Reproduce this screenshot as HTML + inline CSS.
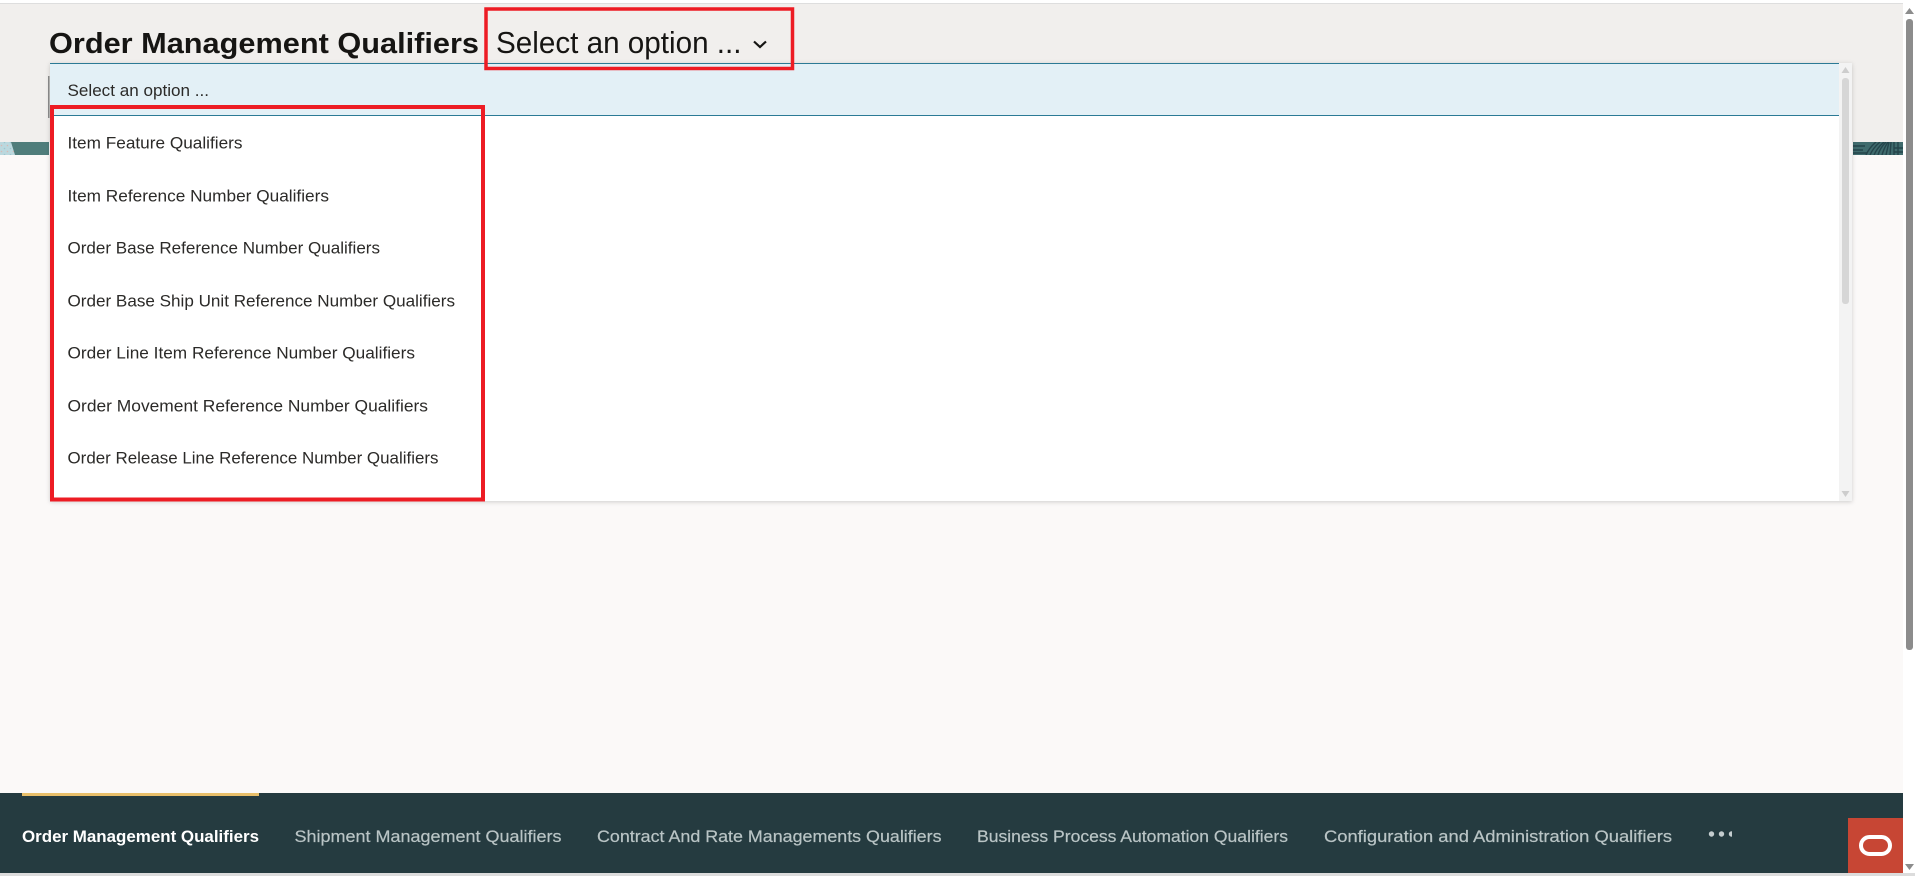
<!DOCTYPE html>
<html lang="en">
<head>
<meta charset="utf-8">
<title>Order Management Qualifiers</title>
<style>
html,body{margin:0;padding:0;width:1915px;height:876px;overflow:hidden;background:#fbf9f8}
svg{display:block;font-family:"Liberation Sans",Arial,sans-serif}
.li{font-size:17px;fill:#2b2a28}
.tab{font-size:17px;fill:#b9c4c5;stroke:#b9c4c5;stroke-width:.2}
</style>
</head>
<body>
<svg width="1915" height="876" viewBox="0 0 1915 876" xmlns="http://www.w3.org/2000/svg">
<defs>
<filter id="sh" x="-2%" y="-5%" width="104%" height="110%"><feDropShadow dx="0" dy="1" stdDeviation="2" flood-color="#000" flood-opacity=".18"/></filter>
<pattern id="spk" width="6" height="6" patternUnits="userSpaceOnUse"><rect width="6" height="6" fill="#bbd8de"/><circle cx="1.5" cy="1.5" r=".8" fill="#d6b9b5"/><circle cx="4.5" cy="4.5" r=".8" fill="#9cc7cf"/></pattern>
<clipPath id="dots"><rect x="1700" y="825" width="32" height="20"/></clipPath>
<clipPath id="rs"><rect x="1853" y="142" width="50" height="13"/></clipPath>
</defs>

<rect width="1915" height="876" fill="#fbf9f8"/>
<rect x="0" y="0" width="1915" height="3" fill="#fff"/>
<rect x="0" y="3" width="1903" height="1" fill="#dedede"/>
<rect x="0" y="4" width="1903" height="138" fill="#f1efed"/>

<rect x="0" y="142" width="49" height="13" fill="#4f7d7b"/>
<path d="M0 142H11L15 155H0Z" fill="url(#spk)"/>
<rect x="1853" y="142" width="50" height="13" fill="#3f6b6d"/>
<g clip-path="url(#rs)" fill="none" stroke="#24444b" stroke-width="1.4">
<path d="M1853 146h12M1853 150h10M1853 153h14"/>
<path d="M1866 155q3-7 10-13M1870 155q3-7 10-13M1874 155q3-7 10-13M1878 155q2-7 8-13M1882 155q2-7 6-13M1886 155l3-13M1890 155l1-13M1894 155v-13M1898 155v-13M1894 148h9M1894 152h9"/>
</g>

<rect x="1903" y="0" width="12" height="873" fill="#fff"/>
<path d="M1909.5 8L1914 14H1905Z" fill="#8c8c8c"/>
<rect x="1906" y="19" width="7" height="631" rx="3" fill="#8c8c8c"/>
<path d="M1905 864H1914L1909.5 870Z" fill="#8c8c8c"/>

<text x="49" y="53" font-size="29" font-weight="700" fill="#161513" textLength="430" lengthAdjust="spacingAndGlyphs">Order Management Qualifiers</text>
<text x="496" y="53" font-size="31" fill="#161513" textLength="245.500" lengthAdjust="spacingAndGlyphs">Select an option ...</text>
<path d="M754 41.500L760 47L766 41.500" fill="none" stroke="#161513" stroke-width="2.200"/>

<rect x="48" y="76" width="1.500" height="42" fill="#8d8d8d"/>
<rect x="50" y="63" width="1802" height="438" fill="#fff" filter="url(#sh)"/>
<rect x="50" y="64" width="1789" height="51" fill="#e3f0f6"/>
<rect x="50" y="63" width="1789" height="1" fill="#2b7a95"/>
<rect x="50" y="115" width="1789" height="1" fill="#2b7a95"/>
<rect x="1839" y="63" width="13" height="438" fill="#f3f3f3"/>
<path d="M1845.500 67L1849.500 73H1841.500Z" fill="#cdcdcd"/>
<rect x="1842" y="78" width="7" height="226" rx="3" fill="#d6d6d6"/>
<path d="M1841.500 491H1849.500L1845.500 497Z" fill="#cdcdcd"/>

<text x="67.500" y="96" class="li" textLength="141.500" lengthAdjust="spacingAndGlyphs">Select an option ...</text>
<text x="67.500" y="148.500" class="li" textLength="175" lengthAdjust="spacingAndGlyphs">Item Feature Qualifiers</text>
<text x="67.500" y="201.500" class="li" textLength="261.500" lengthAdjust="spacingAndGlyphs">Item Reference Number Qualifiers</text>
<text x="67.500" y="253.500" class="li" textLength="312.500" lengthAdjust="spacingAndGlyphs">Order Base Reference Number Qualifiers</text>
<text x="67.500" y="306.500" class="li" textLength="387.500" lengthAdjust="spacingAndGlyphs">Order Base Ship Unit Reference Number Qualifiers</text>
<text x="67.500" y="358.500" class="li" textLength="347.500" lengthAdjust="spacingAndGlyphs">Order Line Item Reference Number Qualifiers</text>
<text x="67.500" y="411.500" class="li" textLength="360.500" lengthAdjust="spacingAndGlyphs">Order Movement Reference Number Qualifiers</text>
<text x="67.500" y="463.500" class="li" textLength="371" lengthAdjust="spacingAndGlyphs">Order Release Line Reference Number Qualifiers</text>

<rect x="486" y="9" width="306.500" height="59.500" fill="none" stroke="#ed1c24" stroke-width="3.500"/>
<rect x="52" y="107" width="431" height="392.500" fill="none" stroke="#ed1c24" stroke-width="4"/>

<rect x="0" y="793" width="1903" height="80" fill="#253b40"/>
<rect x="22" y="793" width="237" height="3" fill="#e8bf6a"/>
<text x="22" y="842" font-size="17" font-weight="700" fill="#fff" textLength="237" lengthAdjust="spacingAndGlyphs">Order Management Qualifiers</text>
<text x="294.500" y="842" class="tab" textLength="267" lengthAdjust="spacingAndGlyphs">Shipment Management Qualifiers</text>
<text x="597" y="842" class="tab" textLength="344.500" lengthAdjust="spacingAndGlyphs">Contract And Rate Managements Qualifiers</text>
<text x="977" y="842" class="tab" textLength="311" lengthAdjust="spacingAndGlyphs">Business Process Automation Qualifiers</text>
<text x="1324" y="842" class="tab" textLength="348" lengthAdjust="spacingAndGlyphs">Configuration and Administration Qualifiers</text>
<g clip-path="url(#dots)" fill="#c4cdcf">
<circle cx="1711.500" cy="834" r="2.700"/>
<circle cx="1721.500" cy="834" r="2.700"/>
<circle cx="1731.500" cy="834" r="2.700"/>
</g>

<rect x="1848" y="818" width="55" height="55" fill="#c74634"/>
<rect x="1861" y="837" width="29" height="17" rx="8.500" fill="none" stroke="#fff" stroke-width="4"/>

<rect x="0" y="873" width="1915" height="3" fill="#dcdcdc"/>
</svg>
</body>
</html>
